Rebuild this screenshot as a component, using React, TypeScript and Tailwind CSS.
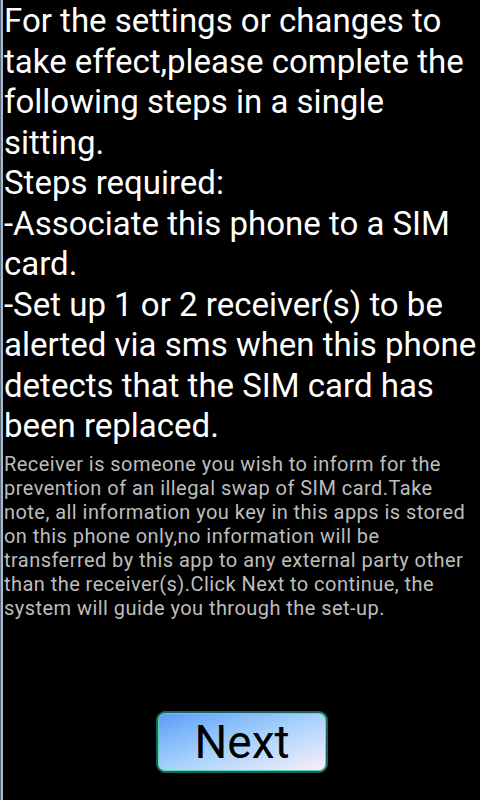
export default function App() {
  return (
    <div className="h-[800px] w-[480px] bg-black flex overflow-hidden" style={{ fontFamily: "Roboto, 'Liberation Sans', sans-serif" }}>
      <div className="w-[3px] bg-[#a9b9c9] border-l border-[#5a6a7a] shrink-0" />
      <div className="flex-1 flex flex-col pl-[1px] pt-[1px]">
        <div className="text-white text-[33px] leading-[40.5px]">
          <p>For the settings or changes to take effect,please complete the following steps in a single sitting.</p>
          <p>Steps required:</p>
          <p>-Associate this phone to a SIM card.</p>
          <p>-Set up 1 or 2 receiver(s) to be alerted via sms when this phone detects that the SIM card has been replaced.</p>
        </div>
        <p className="text-[#bdbdbd] text-[20px] leading-[24px] tracking-[0.45px] mt-[5px]">
          Receiver is someone you wish to inform for the prevention of an illegal swap of SIM card.Take note, all information you key in this apps is stored on this phone only,no information will be transferred by this app to any external party other than the receiver(s).Click Next to continue, the system will guide you through the set-up.
        </p>
        <div className="mt-auto mb-[27px] flex justify-center">
          <button className="w-[172px] h-[62px] rounded-[9px] border-2 border-[#1d5f5a] ring-1 ring-inset ring-[#5fd6b8] bg-gradient-to-br from-[#5a9cf4] via-[#a6d2fb] to-[#fbeefa] text-black text-[46px] leading-none">
            Next
          </button>
        </div>
      </div>
    </div>
  );
}
